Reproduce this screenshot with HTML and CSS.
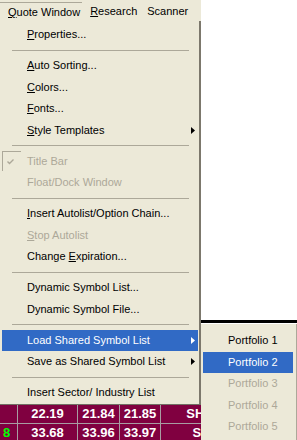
FILE: index.html
```html
<!DOCTYPE html>
<html lang="en">
<head>
    <meta charset="UTF-8">
    <meta name="viewport" content="width=device-width, initial-scale=1.0">
    <title>Quote Window Menu</title>
    <link rel="stylesheet" href="styles.css">
</head>
<body>
    <div class="screen">
        <div class="top">
            <div class="menu-col">
                <div class="menubar">
                    <span class="bar-item open"><u>Q</u>uote Window</span>
                    <span class="bar-item"><u>R</u>esearch</span>
                    <span class="bar-item">Scanner</span>
                </div>

                <ul class="dropdown">
                    <li class="item"><u>P</u>roperties...</li>
                    <li class="sep"></li>
                    <li class="item"><u>A</u>uto Sorting...</li>
                    <li class="item"><u>C</u>olors...</li>
                    <li class="item"><u>F</u>onts...</li>
                    <li class="item has-sub">
                        <span><u>S</u>tyle Templates</span>
                        <svg class="arrow" width="4" height="7" viewBox="0 0 4 7"><polygon points="0,0 4,3.5 0,7" fill="#000"/></svg>
                    </li>
                    <li class="sep"></li>
                    <li class="item disabled checked">
                        <span class="check-box">
                            <svg width="7" height="6" viewBox="0 0 7 6"><polyline points="0.5,2.5 2.5,4.5 6.5,0.5" fill="none" stroke="#aca899" stroke-width="1.4"/></svg>
                        </span>
                        <span>Title Bar</span>
                    </li>
                    <li class="item disabled">Float/Dock Window</li>
                    <li class="sep"></li>
                    <li class="item"><u>I</u>nsert Autolist/Option Chain...</li>
                    <li class="item disabled"><u>S</u>top Autolist</li>
                    <li class="item">Change <u>E</u>xpiration...</li>
                    <li class="sep"></li>
                    <li class="item">Dynamic Symbol List...</li>
                    <li class="item">Dynamic Symbol File...</li>
                    <li class="sep"></li>
                    <li class="item has-sub active">
                        <span>Load Shared Symbol List</span>
                        <svg class="arrow" width="4" height="7" viewBox="0 0 4 7"><polygon points="0,0 4,3.5 0,7" fill="#fff"/></svg>
                    </li>
                    <li class="item has-sub">
                        <span>Save as Shared Symbol List</span>
                        <svg class="arrow" width="4" height="7" viewBox="0 0 4 7"><polygon points="0,0 4,3.5 0,7" fill="#000"/></svg>
                    </li>
                    <li class="sep"></li>
                    <li class="item">Insert Sector/ Industry List</li>
                </ul>
            </div>

            <div class="backdrop">
                <div class="blank"></div>
            </div>
        </div>

        <div class="quotes">
            <div class="row">
                <div class="cell first"></div>
                <div class="cell">22.19</div>
                <div class="cell">21.84</div>
                <div class="cell">21.85</div>
                <div class="cell">SHORT</div>
                <div class="cell"></div>
            </div>
            <div class="row">
                <div class="cell first green">8</div>
                <div class="cell">33.68</div>
                <div class="cell">33.96</div>
                <div class="cell">33.97</div>
                <div class="cell">SELL</div>
                <div class="cell"></div>
            </div>
        </div>

        <!-- submenu pops over the quote grid -->
        <ul class="submenu">
            <li class="sub-item">Portfolio 1</li>
            <li class="sub-item active">Portfolio 2</li>
            <li class="sub-item disabled">Portfolio 3</li>
            <li class="sub-item disabled">Portfolio 4</li>
            <li class="sub-item disabled">Portfolio 5</li>
        </ul>
    </div>
</body>
</html>
```

FILE: styles.css
```css
body {
    margin: 0;
    font-family: "Liberation Sans", Arial, sans-serif;
    font-size: 11px;
    color: #000;
    background-color: #fff;
}

.screen {
    position: relative;
    width: 297px;
    height: 440px;
    overflow: hidden;
}

.top {
    display: flex;
}

.menu-col {
    width: 201px;
    flex-shrink: 0;
}

.menubar {
    height: 21px;
    display: flex;
    align-items: flex-end;
    background-color: #ece9d8;
}

.bar-item {
    height: 19px;
    line-height: 19px;
    padding: 0 2px 0 8px;
    box-sizing: border-box;
    white-space: nowrap;
}

.bar-item.open {
    border-top: 1px solid #aca899;
    line-height: 18px;
}

.dropdown {
    list-style: none;
    margin: 0;
    padding: 3px 0 0;
    background-color: #ece9d8;
    border-right: 2px solid #7c786c;
    border-bottom: 1px solid #716f64;
}

.item {
    height: 21.5px;
    line-height: 21.5px;
    margin: 0 1px 0 2px;
    padding: 0 3px 0 25px;
    white-space: nowrap;
}

.item.has-sub {
    display: flex;
    align-items: center;
    justify-content: space-between;
}

.item.checked {
    display: flex;
    align-items: center;
    padding-left: 0;
}

.item.disabled {
    color: #aca899;
}

.item.active {
    background-color: #316ac5;
    color: #fff;
}

.check-box {
    display: flex;
    align-items: center;
    width: 19px;
    height: 20px;
    margin-right: 6px;
    padding-left: 4px;
    box-sizing: border-box;
    border-top: 1px solid #aca899;
    border-left: 1px solid #aca899;
}

.arrow {
    display: block;
}

.sep {
    height: 1px;
    margin: 4px 10px 4.5px 12px;
    background-color: #aca899;
}

.backdrop {
    flex: 1;
}

.blank {
    height: 320px;
    border-bottom: 3px solid #000;
}

.quotes {
    background-color: #800040;
    color: #fff;
    font-size: 13px;
    font-weight: bold;
}

.row {
    display: grid;
    grid-template-columns: 17px 60px 42px 41px 97px 1fr;
    height: 18px;
    line-height: 18px;
    border-bottom: 1px solid #a89ca2;
}

.row:last-child {
    border-bottom: none;
}

.cell {
    border-left: 1px solid #a89ca2;
    text-align: center;
    overflow: hidden;
    white-space: nowrap;
}

.cell.first {
    border-left: none;
    text-align: left;
    padding-left: 3px;
}

.green {
    color: #00ff00;
}

.submenu {
    position: absolute;
    left: 201px;
    top: 324px;
    width: 96px;
    height: 116px;
    box-sizing: border-box;
    list-style: none;
    margin: 0;
    padding: 6px 0 0;
    background-color: #ece9d8;
    border-right: 1px solid #aca899;
}

.sub-item {
    height: 21.5px;
    line-height: 21.5px;
    margin: 0 3px 0 2px;
    padding-left: 25px;
    white-space: nowrap;
}

.sub-item.active {
    background-color: #316ac5;
    color: #fff;
}

.sub-item.disabled {
    color: #aca899;
}
```
